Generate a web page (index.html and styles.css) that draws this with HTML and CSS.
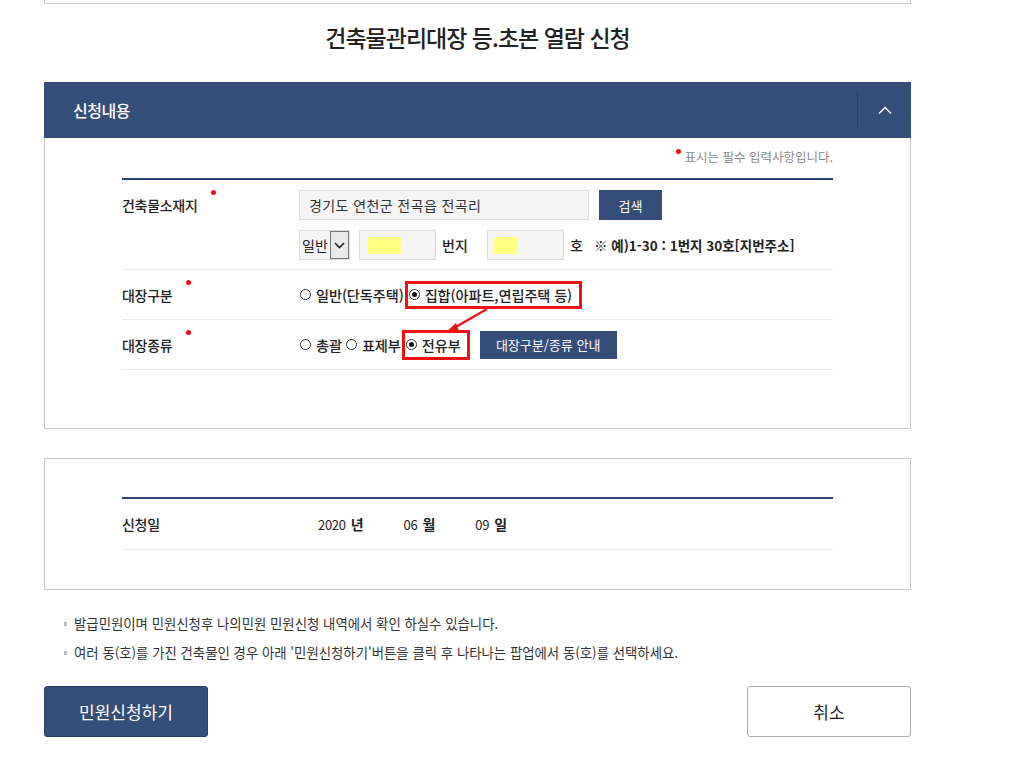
FILE: index.html
```html
<!DOCTYPE html>
<html lang="ko">
<head>
<meta charset="utf-8">
<link rel="stylesheet" href="styles.css">
</head>
<body>
<div class="wrap">
  <div class="topbox"></div>
  <h1 class="title">건축물관리대장 등.초본 열람 신청</h1>

  <section class="panel">
    <div class="panel-head">
      <span class="panel-title">신청내용</span>
      <span class="toggle"><svg width="14" height="8" viewBox="0 0 14 8"><path d="M1 7.5 L7 1.5 L13 7.5" fill="none" stroke="#fff" stroke-width="1.4"/></svg></span>
    </div>
    <div class="panel-body">
      <p class="req-note"><span class="dot"></span>표시는 필수 입력사항입니다.</p>
      <div class="table">
        <div class="row row-addr">
          <div class="label">건축물소재지<span class="dot"></span></div>
          <div class="field">
            <div class="line">
              <div class="input addr">경기도 연천군 전곡읍 전곡리</div>
              <button class="btn-navy search">검색</button>
            </div>
            <div class="line">
              <div class="select"><span>일반</span><span class="arrow"><svg width="11" height="7" viewBox="0 0 11 7"><path d="M1 1 L5.5 5.5 L10 1" fill="none" stroke="#222" stroke-width="1.6"/></svg></span></div>
              <div class="input small"><span class="hl"></span></div>
              <span class="unit">번지</span>
              <div class="input small ho"><span class="hl hl2"></span></div>
              <span class="unit">호</span>
              <span class="example">※ 예)1-30 : 1번지 30호[지번주소]</span>
            </div>
          </div>
        </div>
        <div class="row">
          <div class="label">대장구분<span class="dot"></span></div>
          <div class="field radios">
            <span class="radio"></span><span class="rtext">일반(단독주택)</span>
            <span class="mark mark1"><span class="radio on"></span><span class="rtext">집합(아파트,연립주택 등)</span></span>
          </div>
        </div>
        <div class="row">
          <div class="label">대장종류<span class="dot"></span></div>
          <div class="field radios">
            <span class="radio"></span><span class="rtext">총괄</span>
            <span class="radio"></span><span class="rtext">표제부</span>
            <span class="mark mark2"><span class="radio on"></span><span class="rtext">전유부</span></span>
            <button class="btn-navy guide">대장구분/종류 안내</button>
          </div>
        </div>
      </div>
      <svg class="arrow-overlay" width="60" height="40" viewBox="0 0 60 40">
        <line x1="45" y1="2" x2="12" y2="21" stroke="#e8141a" stroke-width="2.4"/>
        <path d="M3 26 L14 16 L17 24 Z" fill="#e8141a"/>
      </svg>
    </div>
  </section>

  <section class="panel panel2">
    <div class="panel-body body2">
      <div class="table">
        <div class="row">
          <div class="label">신청일</div>
          <div class="field date">
            <span class="num">2020</span><span class="du">년</span>
            <span class="num">06</span><span class="du">월</span>
            <span class="num">09</span><span class="du">일</span>
          </div>
        </div>
      </div>
    </div>
  </section>

  <ul class="notes">
    <li>발급민원이며 민원신청후 나의민원 민원신청 내역에서 확인 하실수 있습니다.</li>
    <li>여러 동(호)를 가진 건축물인 경우 아래 '민원신청하기'버튼을 클릭 후 나타나는 팝업에서 동(호)를 선택하세요.</li>
  </ul>

  <div class="actions">
    <button class="btn-submit">민원신청하기</button>
    <button class="btn-cancel">취소</button>
  </div>
</div>
</body>
</html>
```

FILE: styles.css
```css
* { box-sizing: border-box; }
html, body { margin: 0; padding: 0; background: #fff; }
body {
  font-family: "Noto Sans CJK KR", "Noto Sans", sans-serif;
  color: #222;
  font-size: 14px;
}
.wrap { width: 867px; margin-left: 44px; }
.topbox {
  height: 4px;
  border: 1px solid #ccc;
  border-top: none;
}
.title {
  margin: 0;
  height: 78px;
  padding-top: 18px;
  text-align: center;
  font-size: 23px;
  font-weight: 500;
  letter-spacing: -1px;
  line-height: 30px;
  color: #222;
}
.panel-head {
  height: 56px;
  background: #344d79;
  display: flex;
  align-items: center;
  justify-content: space-between;
}
.panel-title {
  color: #fff;
  font-size: 16px;
  font-weight: 500;
  padding-left: 29px;
  letter-spacing: -0.5px;
}
.toggle {
  width: 54px;
  height: 38px;
  border-left: 1px solid #2b4168;
  display: flex;
  align-items: center;
  justify-content: center;
}
.panel-body {
  position: relative;
  border: 1px solid #ccc;
  border-top: none;
  padding: 9px 77px 58px 77px;
}
.req-note {
  margin: 0;
  height: 31px;
  text-align: right;
  font-size: 12.5px;
  color: #888;
  letter-spacing: 0;
  line-height: 20px;
}
.dot {
  display: inline-block;
  width: 5px;
  height: 5px;
  border-radius: 50%;
  background: #ee1111;
  vertical-align: top;
  margin: 2px 4px 0 0;
}
.table { border-top: 2px solid #2b4170; }
.row {
  display: flex;
  align-items: center;
  min-height: 50px;
  border-bottom: 1px solid #ebebeb;
}
.row-addr { padding: 10px 0 9px; }
.label {
  width: 177px;
  flex: none;
  font-size: 14px;
  font-weight: 500;
  letter-spacing: -0.3px;
}
.row-addr .label { align-self: flex-start; padding-top: 5px; }
.label .dot { margin: -5px 0 0 14px; }
.field { display: flex; flex-direction: column; gap: 10px; }
.line { display: flex; align-items: center; }
.input {
  height: 30px;
  background: #f4f4f4;
  border: 1px solid #ddd;
  font-size: 14px;
  line-height: 28px;
  padding-left: 9px;
  color: #333;
  letter-spacing: 0.4px;
}
.input.addr { width: 290px; }
.btn-navy {
  background: #344d79;
  border: none;
  color: #fff;
  font-family: inherit;
  font-size: 13px;
  height: 30px;
  padding: 0;
}
.search { width: 63px; margin-left: 10px; }
.select {
  width: 51px;
  height: 30px;
  border: 1px solid #ddd;
  background: #f4f4f4;
  display: flex;
  align-items: center;
  font-size: 14px;
  padding-left: 2px;
}
.select span:first-child { flex: 1; }
.select .arrow {
  width: 19px;
  height: 28px;
  border: 1px solid #777;
  background: #e9e9e9;
  display: flex;
  align-items: center;
  justify-content: center;
}
.input.small {
  width: 77px;
  margin-left: 9px;
  padding: 6px 0 0 8px;
}
.input.ho { margin-left: 0; padding-left: 5px; }
.hl { display: block; width: 33px; height: 17px; background: #ffff80; }
.hl2 { width: 24px; }
.unit { font-weight: 500; font-size: 14px; margin: 0 6px 0 6px; width: 39px; flex: none; }
.line .unit:nth-of-type(2) { width: 18px; }
.example { font-weight: 700; font-size: 13.5px; margin-left: 0; letter-spacing: 0; }
.radios { flex-direction: row; align-items: center; gap: 0; font-size: 14.2px; font-weight: 500; }
.radio {
  display: inline-block;
  width: 11px;
  height: 11px;
  border: 1px solid #333;
  border-radius: 50%;
  margin: 0 5px 0 1px;
  position: relative;
  flex: none;
}
.radio.on::after {
  content: "";
  position: absolute;
  left: 2px; top: 2px;
  width: 5px; height: 5px;
  border-radius: 50%;
  background: #111;
}
.rtext { margin-right: 3px; letter-spacing: -0.1px; }
.mark {
  display: inline-flex;
  align-items: center;
  border: 3px solid #ee1111;
  padding: 0 4px 0 0;
  margin-left: -2px;
}
.mark1 { height: 28px; }
.mark2 { height: 30px; padding-right: 3px; }
.guide { width: 137px; height: 28px; margin-left: 10px; letter-spacing: 0; }
.arrow-overlay { position: absolute; left: 397px; top: 169px; }

.panel2 { margin-top: 29px; }
.body2 {
  border-top: 1px solid #ccc;
  padding: 38px 77px 39px;
}
.body2 .row { min-height: 51px; }
.date { flex-direction: row; align-items: center; gap: 0; padding-left: 19px; }
.num { font-size: 13px; letter-spacing: -0.3px; margin-right: 5px; }
.du { font-weight: 600; font-size: 14px; margin-right: 40px; }

.notes {
  list-style: none;
  margin: 22px 0 0;
  padding: 0 0 0 20px;
  font-size: 13.4px;
  color: #333;
  letter-spacing: 0;
}
.notes li { height: 29px; line-height: 22px; position: relative; padding-left: 10px; }
.notes li::before {
  content: "";
  position: absolute;
  left: 0; top: 10px;
  width: 3px; height: 4px;
  background: #bbb;
}
.actions {
  display: flex;
  justify-content: space-between;
  margin-top: 16px;
}
.actions button {
  width: 164px;
  height: 51px;
  border-radius: 3px;
  font-family: inherit;
  font-size: 17px;
}
.btn-submit { background: #344d79; color: #fff; border: 1px solid #2b3f66; }
.btn-cancel { background: #fff; color: #222; border: 1px solid #aaa; font-size: 16px; }
```
